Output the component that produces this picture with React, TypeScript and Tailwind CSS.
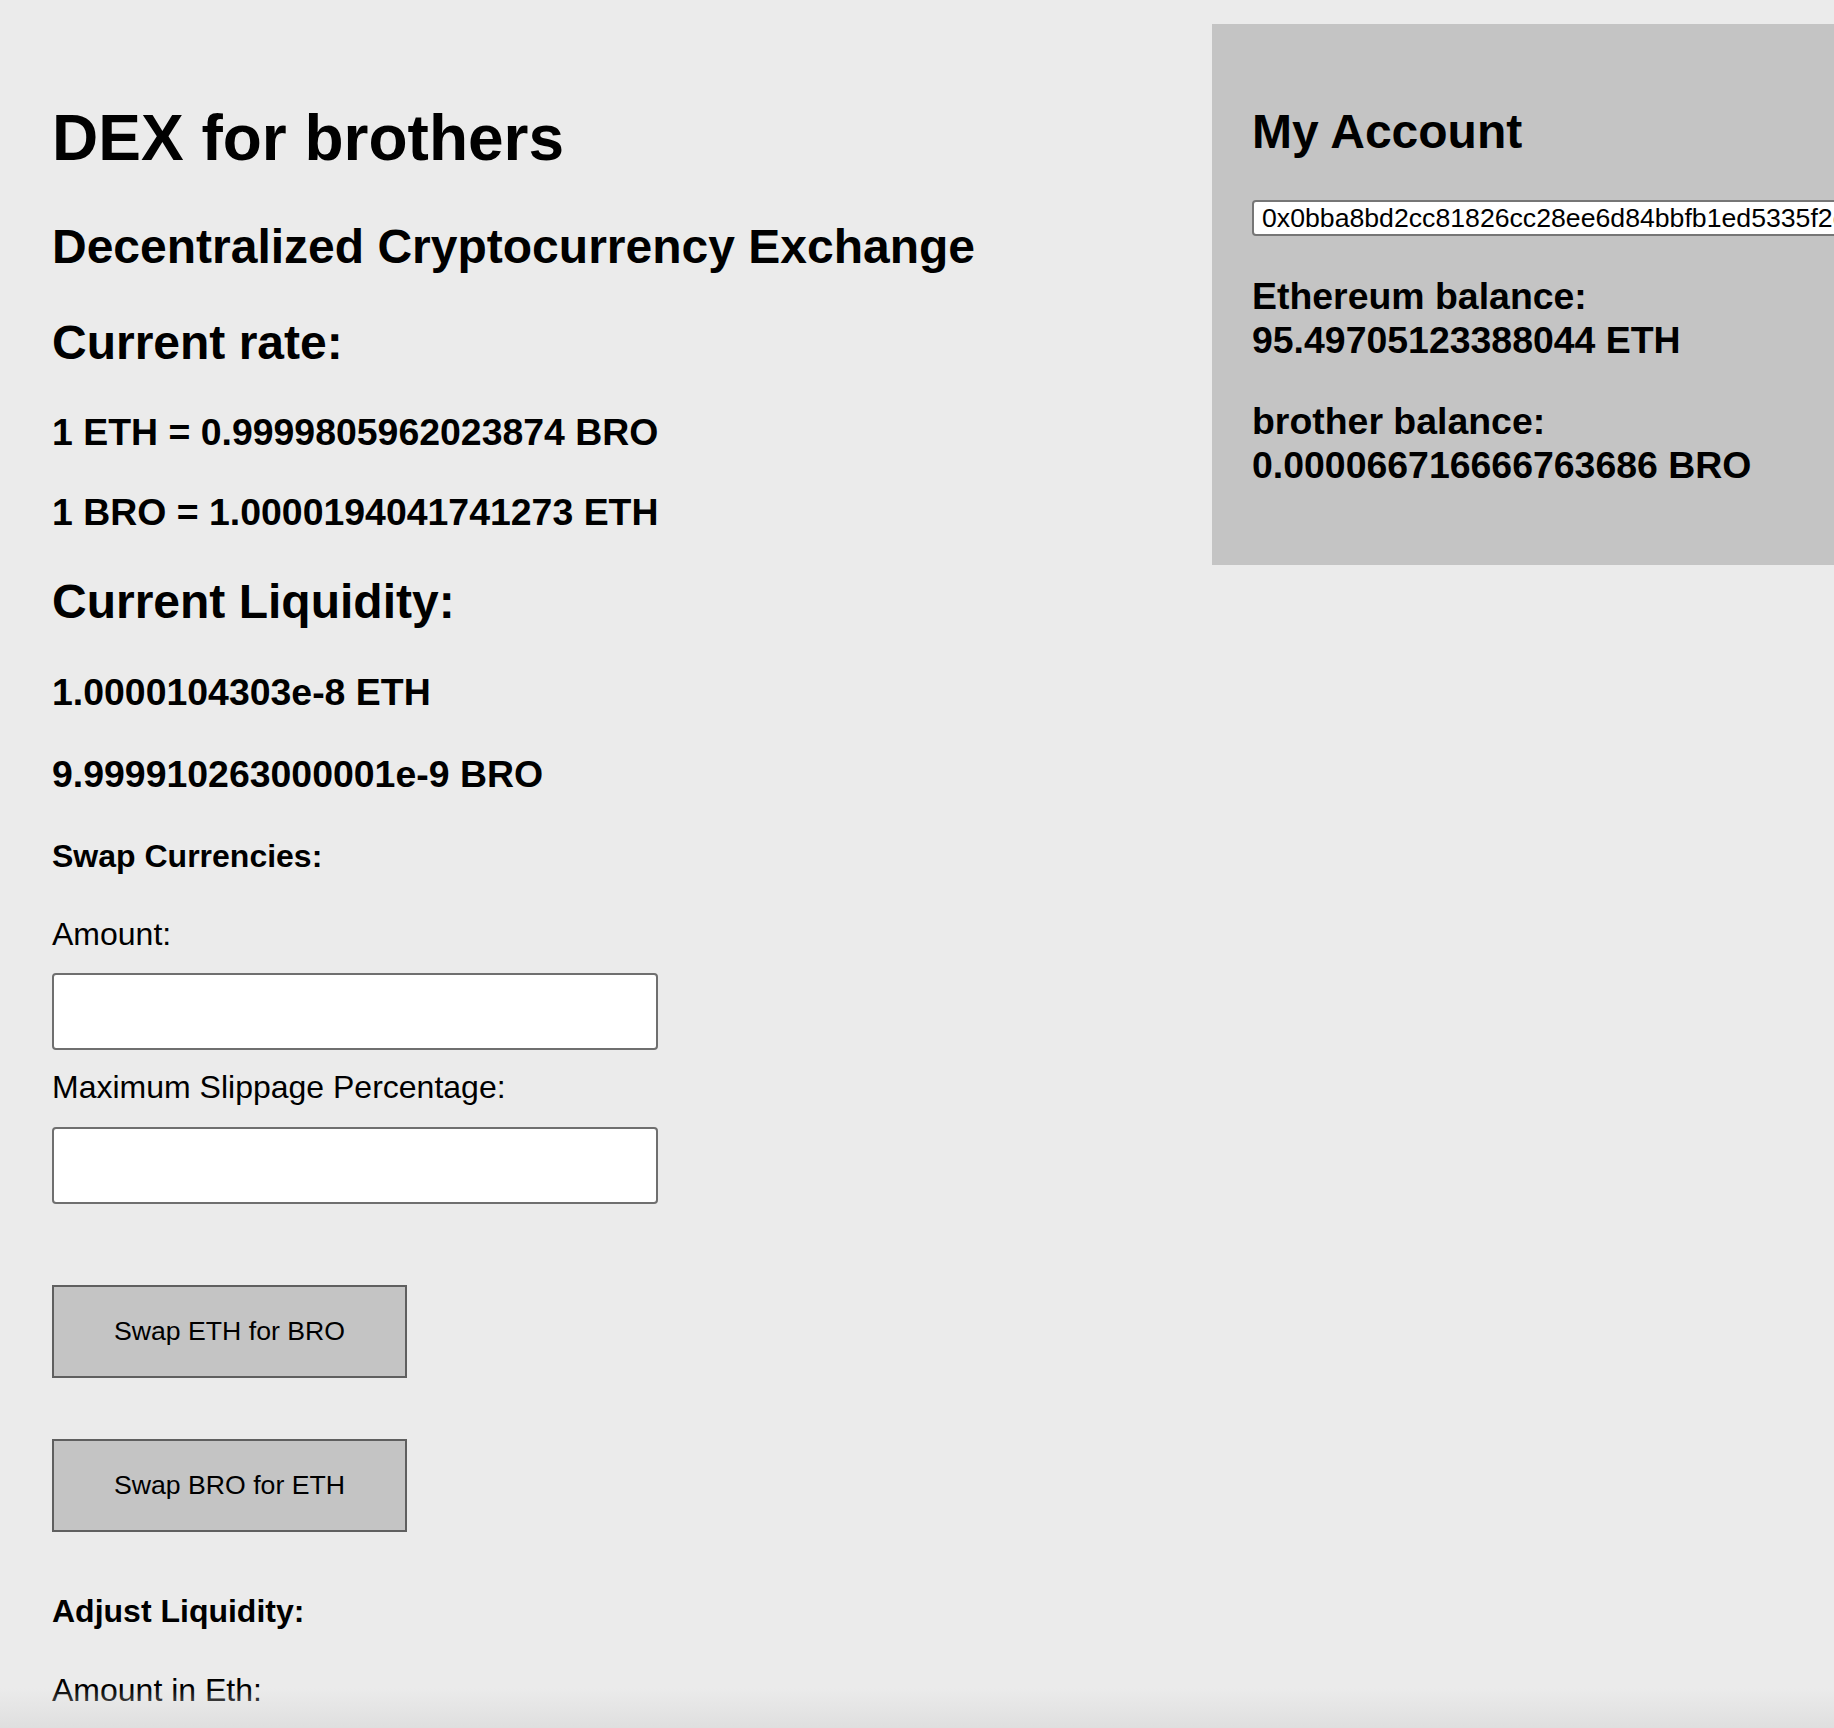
import { useState } from "react";

const rate = { ethToBro: "0.9999805962023874", broToEth: "1.0000194041741273" };
const liquidity = { eth: "1.0000104303e-8", bro: "9.999910263000001e-9" };
const account = {
  address: "0x0bba8bd2cc81826cc28ee6d84bbfb1ed5335f2e1",
  eth: "95.49705123388044",
  bro: "0.000066716666763686",
};

const Field = ({ value, onChange }: { value: string; onChange: (v: string) => void }) => (
  <input
    type="text"
    value={value}
    onChange={(e) => onChange(e.target.value)}
    className="block h-[77px] w-[606px] rounded-[4px] border-2 border-[#6f6f6f] bg-white px-3 text-[26.67px] outline-none"
  />
);

const SwapButton = ({ label }: { label: string }) => (
  <div className="box-border flex h-[93px] min-h-[93px] w-[355px] items-center justify-center border-[2.5px] border-[#5f5f5f] bg-[#c4c4c4] text-[26.67px] leading-[31px] text-black">
    <button className="h-full w-full">{label}</button>
  </div>
);

export default function App() {
  const [amount, setAmount] = useState("");
  const [slippage, setSlippage] = useState("");
  const [ethAmount, setEthAmount] = useState("");

  return (
    <div className="relative flex h-[1728px] w-full overflow-hidden bg-[#ebebeb] font-['Liberation_Sans',Arial,sans-serif] text-black">
      {/* main column */}
      <div className="flex w-[1212px] shrink-0 flex-col pl-[52px] pt-[101px]">
        <h1 className="text-[64px] font-bold leading-[75px]">DEX for brothers</h1>
        <h2 className="mt-[43px] text-[48px] font-bold leading-[56px]">
          Decentralized Cryptocurrency Exchange
        </h2>

        <h2 className="mt-[40px] text-[48px] font-bold leading-[56px]">Current rate:</h2>
        <h3 className="mt-[39px] text-[37.44px] font-bold leading-[44px]">
          1 ETH = {rate.ethToBro} BRO
        </h3>
        <h3 className="mt-[35.5px] text-[37.44px] font-bold leading-[44px]">
          1 BRO = {rate.broToEth} ETH
        </h3>

        <h2 className="mt-[40px] text-[48px] font-bold leading-[56px]">Current Liquidity:</h2>
        <h3 className="mt-[40px] text-[37.44px] font-bold leading-[44px]">{liquidity.eth} ETH</h3>
        <h3 className="mt-[38.5px] text-[37.44px] font-bold leading-[44px]">{liquidity.bro} BRO</h3>

        <h4 className="mt-[41px] text-[32px] font-bold leading-[38px]">Swap Currencies:</h4>
        <label className="mt-[39.5px] text-[32px] leading-[38px]">Amount:</label>
        <div className="mt-[20px]">
          <Field value={amount} onChange={setAmount} />
        </div>
        <label className="mt-[18px] text-[32px] leading-[38px]">Maximum Slippage Percentage:</label>
        <div className="mt-[21px]">
          <Field value={slippage} onChange={setSlippage} />
        </div>

        <div className="mt-[81px]">
          <SwapButton label="Swap ETH for BRO" />
        </div>
        <div className="mt-[61px]">
          <SwapButton label="Swap BRO for ETH" />
        </div>

        <h4 className="mt-[60px] text-[32px] font-bold leading-[38px]">Adjust Liquidity:</h4>
        <label className="mt-[41px] text-[32px] leading-[38px]">Amount in Eth:</label>
        <div className="mt-[20px]">
          <Field value={ethAmount} onChange={setEthAmount} />
        </div>
      </div>

      {/* account panel */}
      <div className="mt-[24px] h-fit w-[700px] shrink-0 bg-[#c4c4c4] px-[40px] py-[40px]">
        <h2 className="mt-[40px] text-[48px] font-bold leading-[56px]">My Account</h2>
        <input
          readOnly
          value={account.address}
          className="mt-[40px] block h-[36px] w-[640px] rounded-[4px] border-2 border-[#767676] bg-white px-[8px] text-[26.67px] outline-none"
        />
        <h3 className="mt-[37.5px] text-[37.44px] font-bold leading-[44px]">
          Ethereum balance:
          <br />
          {account.eth} ETH
        </h3>
        <h3 className="mb-[37.5px] mt-[37.5px] text-[37.44px] font-bold leading-[44px]">
          brother balance:
          <br />
          {account.bro} BRO
        </h3>
      </div>

      {/* bottom window shadow */}
      <div className="pointer-events-none absolute bottom-0 left-0 right-0 h-[40px] bg-linear-to-b from-transparent to-[#dcdcdc]/80" />
    </div>
  );
}
